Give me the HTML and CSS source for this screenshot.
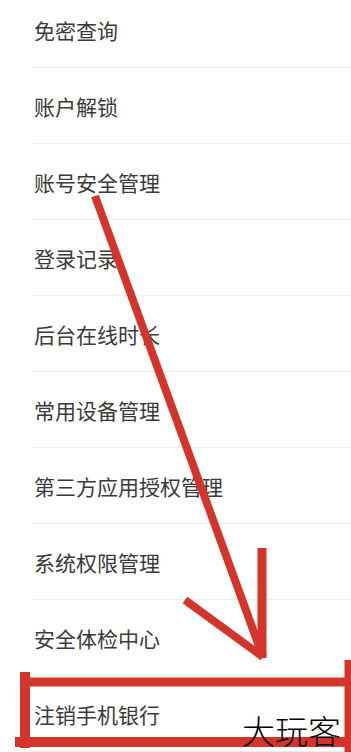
FILE: index.html
```html
<!DOCTYPE html>
<html lang="zh-CN">
<head>
<meta charset="utf-8">
<title>安全设置</title>
<link rel="stylesheet" href="styles.css">
</head>
<body>
<div class="page">
  <ul class="menu">
    <li class="item">免密查询</li>
    <li class="item">账户解锁</li>
    <li class="item">账号安全管理</li>
    <li class="item">登录记录</li>
    <li class="item">后台在线时长</li>
    <li class="item">常用设备管理</li>
    <li class="item">第三方应用授权管理</li>
    <li class="item">系统权限管理</li>
    <li class="item">安全体检中心</li>
    <li class="item">注销手机银行</li>
  </ul>
  <svg class="marks" width="351" height="752" viewBox="0 0 351 752">
    <g fill="none" stroke="#d4342a" stroke-width="8">
      <line x1="95" y1="196" x2="263" y2="657" stroke-linecap="butt"/>
      <line x1="185" y1="600" x2="263" y2="657"/>
      <line x1="262" y1="548" x2="262" y2="658" stroke-width="9"/>
      <line x1="25" y1="672" x2="25" y2="748" stroke-width="10"/>
      <line x1="25" y1="682" x2="351" y2="682" stroke-width="9"/>
      <line x1="15" y1="742" x2="351" y2="742" stroke-width="10"/>
      <line x1="348" y1="660" x2="348" y2="752" stroke-width="7"/>
    </g>
  </svg>
  <div class="watermark">大玩客</div>
</div>
</body>
</html>
```
FILE: styles.css
```css
html, body {
  margin: 0;
  padding: 0;
  background: #ffffff;
}
body {
  width: 351px;
  height: 752px;
  overflow: hidden;
  font-family: "Noto Sans CJK SC", "Noto Sans", sans-serif;
}
.page {
  position: relative;
  width: 351px;
  height: 752px;
  overflow: hidden;
}
.menu {
  list-style: none;
  margin: -8px 0 0 32px;
  padding: 0;
}
.item {
  display: flex;
  align-items: center;
  box-sizing: border-box;
  height: 76px;
  padding: 0 0 0 2px;
  border-bottom: 1px solid #ececec;
  font-size: 21px;
  line-height: 24px;
  color: #3a3a3a;
}
.marks {
  position: absolute;
  left: 0;
  top: 0;
}
.watermark {
  position: absolute;
  left: 242px;
  top: 713px;
  font-family: "Noto Sans CJK SC", sans-serif;
  font-weight: 300;
  font-size: 33px;
  line-height: 34px;
  color: #000000;
}
```
